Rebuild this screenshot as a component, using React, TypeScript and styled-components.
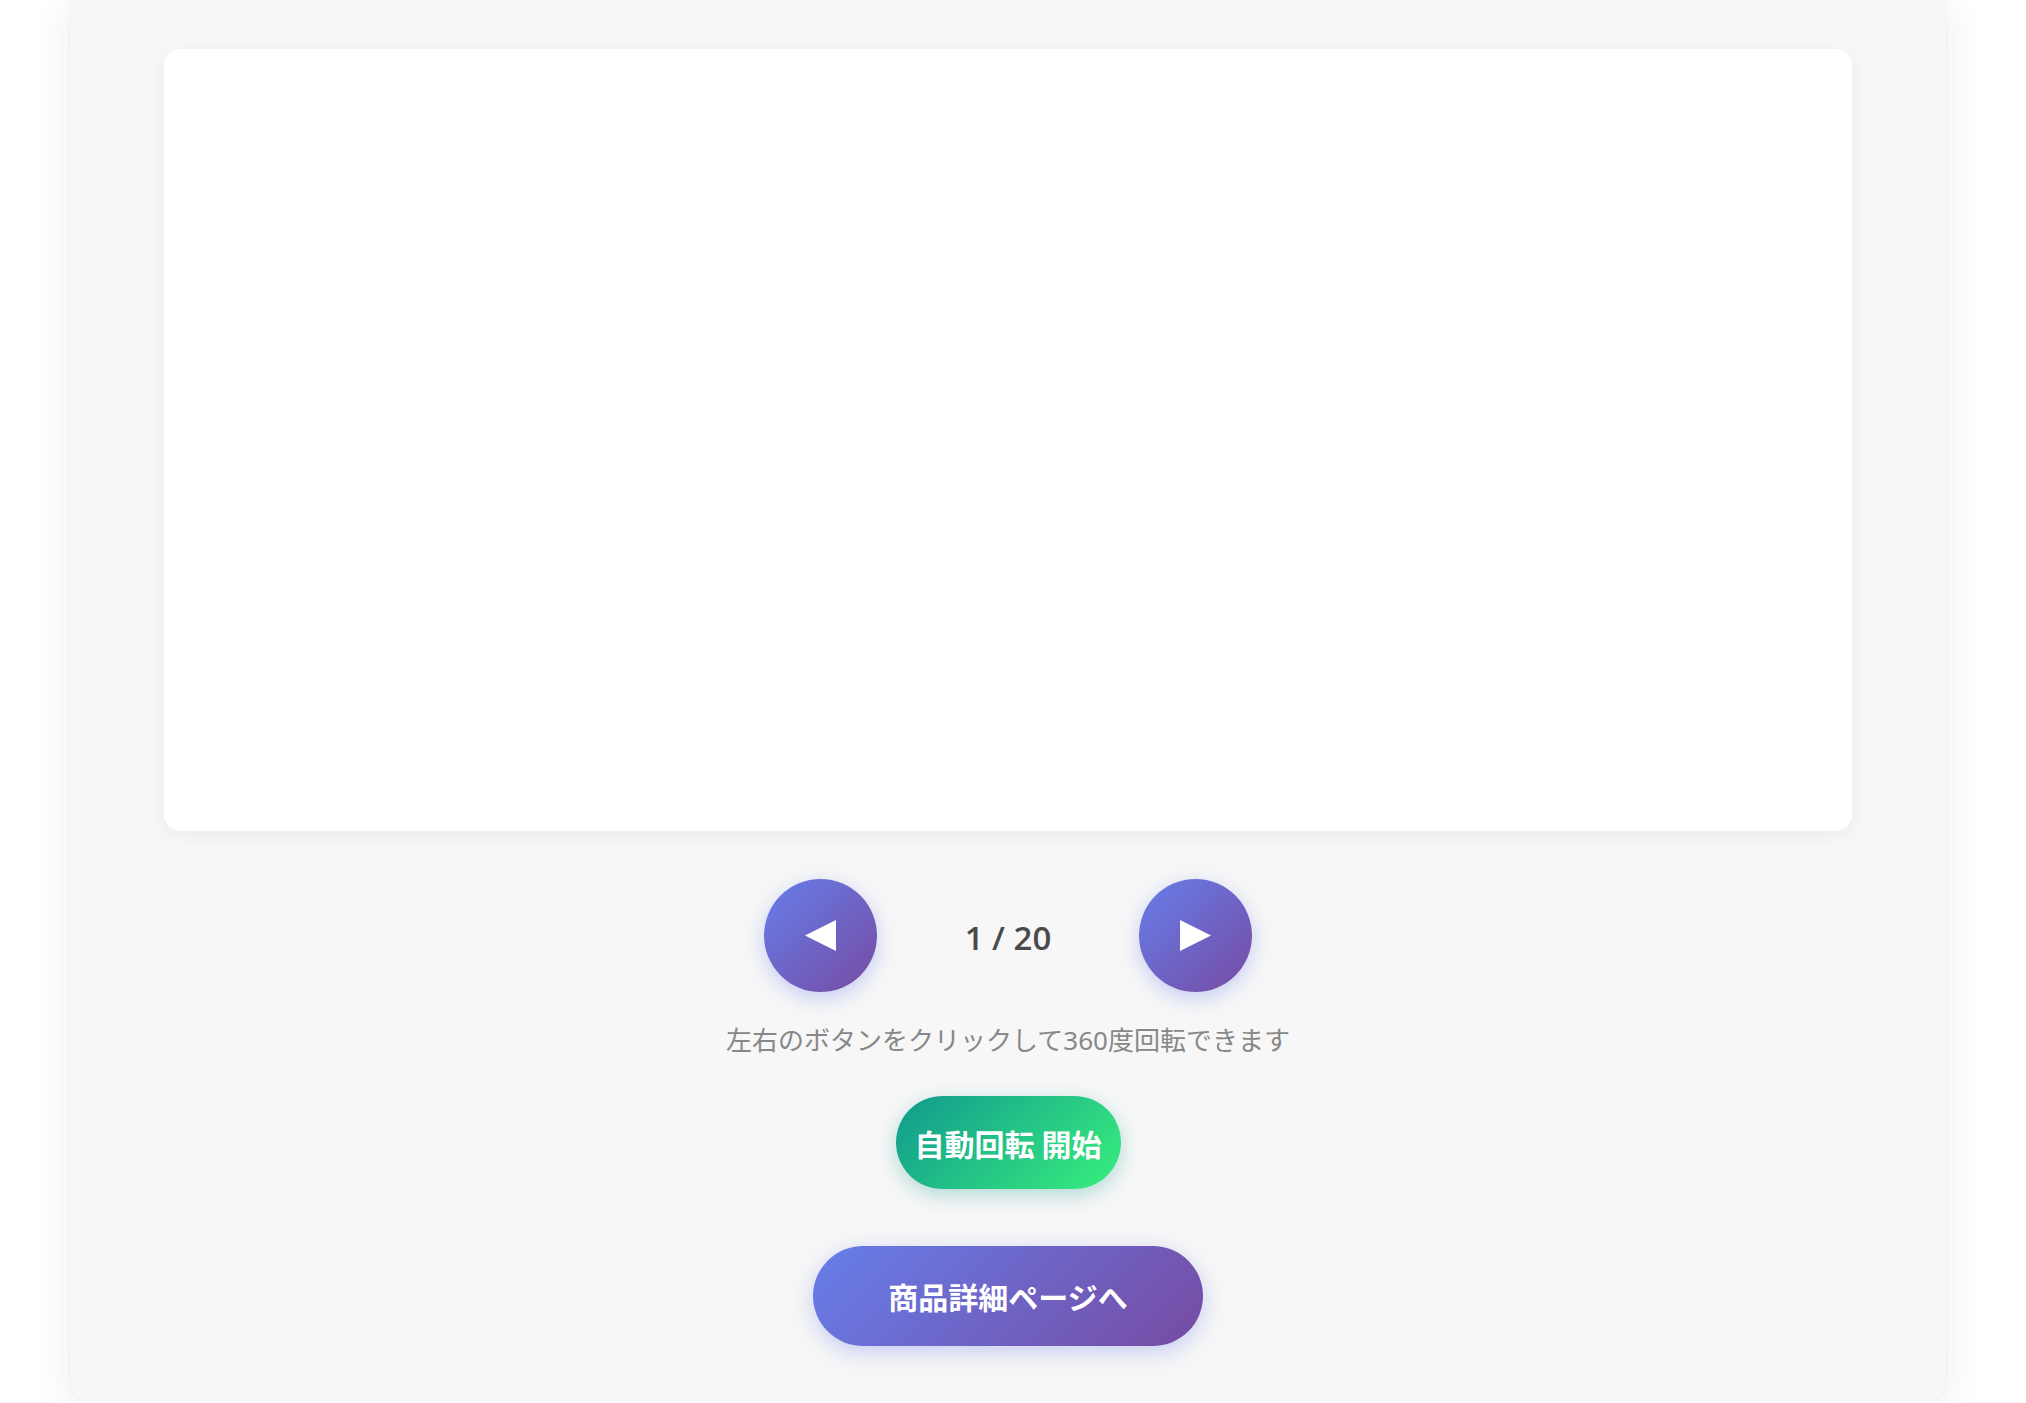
import React, { useState } from "react";
import styled, { createGlobalStyle } from "styled-components";

const GlobalStyle = createGlobalStyle`
  html, body {
    margin: 0;
    padding: 0;
    background: #ffffff;
    font-family: "Noto Sans", "Noto Sans CJK JP", sans-serif;
  }
`;

// outer grey panel, its top edge sits above the viewport
const Panel = styled.div`
  width: 1876px;
  margin: 0 80px 0 70px;
  box-sizing: border-box;
  padding: 49px 94px 55px;
  background: #f7f7f7;
  border-radius: 0 0 16px 16px;
  box-shadow: 0 0 2px rgba(0, 0, 0, 0.08), 0 4px 40px rgba(0, 0, 0, 0.08);
  display: flex;
  flex-direction: column;
  align-items: center;
`;

const Stage = styled.div`
  align-self: stretch;
  height: 782px;
  background: #ffffff;
  border-radius: 16px;
  box-shadow: 0 4px 16px rgba(0, 0, 0, 0.05);
`;

const Controls = styled.div`
  margin-top: 48px;
  display: flex;
  align-items: center;
  gap: 40px;
`;

const RoundButton = styled.button`
  width: 113px;
  height: 113px;
  border: none;
  border-radius: 50%;
  padding: 0;
  background: linear-gradient(135deg, #667eea 0%, #764ba2 100%);
  box-shadow: 0 6px 20px rgba(102, 126, 234, 0.35);
  display: flex;
  align-items: center;
  justify-content: center;
  cursor: pointer;
`;

const Counter = styled.div`
  min-width: 182px;
  text-align: center;
  font-family: "Open Sans", "Noto Sans", sans-serif;
  font-size: 33px;
  font-weight: 600;
  color: #4a4a4a;
  line-height: 1;
  padding-top: 4px;
`;

const Hint = styled.p`
  margin: 29px 0 0;
  font-size: 26px;
  line-height: 39px;
  color: #888888;
`;

const PillButton = styled.button<{ $variant: "green" | "purple" }>`
  border: none;
  border-radius: 999px;
  color: #ffffff;
  font-family: "Noto Sans CJK JP", sans-serif;
  font-weight: 700;
  font-size: 30px;
  cursor: pointer;
  display: flex;
  align-items: center;
  justify-content: center;
  box-sizing: border-box;
  ${({ $variant }) =>
    $variant === "green"
      ? `
    margin-top: 36px;
    width: 225px;
    height: 93px;
    background: linear-gradient(135deg, #11998e 0%, #38ef7d 100%);
    box-shadow: 0 6px 20px rgba(17, 153, 142, 0.3);
  `
      : `
    margin-top: 57px;
    width: 390px;
    height: 100px;
    background: linear-gradient(135deg, #667eea 0%, #764ba2 100%);
    box-shadow: 0 6px 22px rgba(102, 126, 234, 0.35);
  `}
`;

function Arrow({ dir }: { dir: "left" | "right" }) {
  return (
    <svg width="33" height="33" viewBox="0 0 33 33">
      {dir === "left" ? (
        <polygon points="1,16.5 32,1 32,32" fill="#fff" />
      ) : (
        <polygon points="32,16.5 1,1 1,32" fill="#fff" />
      )}
    </svg>
  );
}

export default function App() {
  const total = 20;
  const [frame, setFrame] = useState(1);
  const [auto, setAuto] = useState(false);

  const prev = () => setFrame((f) => (f === 1 ? total : f - 1));
  const next = () => setFrame((f) => (f === total ? 1 : f + 1));

  return (
    <>
      <GlobalStyle />
      <Panel>
        <Stage />
        <Controls>
          <RoundButton onClick={prev} aria-label="prev">
            <Arrow dir="left" />
          </RoundButton>
          <Counter>
            {frame} / {total}
          </Counter>
          <RoundButton onClick={next} aria-label="next">
            <Arrow dir="right" />
          </RoundButton>
        </Controls>
        <Hint>左右のボタンをクリックして360度回転できます</Hint>
        <PillButton $variant="green" onClick={() => setAuto(!auto)}>
          {auto ? "自動回転 停止" : "自動回転 開始"}
        </PillButton>
        <PillButton $variant="purple">商品詳細ページへ</PillButton>
      </Panel>
    </>
  );
}
